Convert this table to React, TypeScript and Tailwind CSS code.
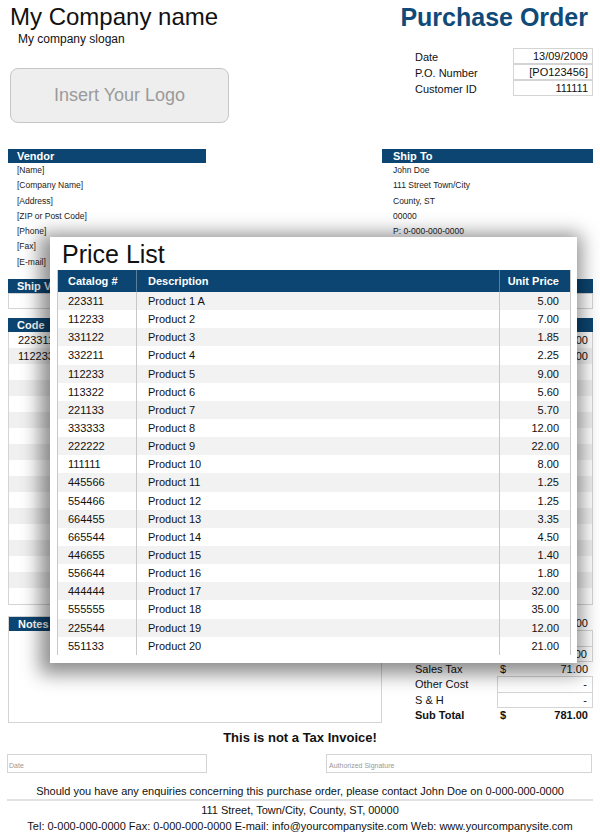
import React from "react";

const blue = "bg-[#0c4571]";

const vendor = ["[Name]", "[Company Name]", "[Address]", "[ZIP or Post Code]", "[Phone]", "[Fax]", "[E-mail]"];
const shipTo = ["John Doe", "111 Street Town/City", "County, ST", "00000", "P: 0-000-000-0000"];

const orderRows = [
  { code: "223311", desc: "Product 1 A", qty: "100", price: "5.00", total: "500.00" },
  { code: "112233", desc: "Product 2", qty: "30", price: "7.00", total: "210.00" },
];

const priceList = [
  ["223311", "Product 1 A", "5.00"],
  ["112233", "Product 2", "7.00"],
  ["331122", "Product 3", "1.85"],
  ["332211", "Product 4", "2.25"],
  ["112233", "Product 5", "9.00"],
  ["113322", "Product 6", "5.60"],
  ["221133", "Product 7", "5.70"],
  ["333333", "Product 8", "12.00"],
  ["222222", "Product 9", "22.00"],
  ["111111", "Product 10", "8.00"],
  ["445566", "Product 11", "1.25"],
  ["554466", "Product 12", "1.25"],
  ["664455", "Product 13", "3.35"],
  ["665544", "Product 14", "4.50"],
  ["446655", "Product 15", "1.40"],
  ["556644", "Product 16", "1.80"],
  ["444444", "Product 17", "32.00"],
  ["555555", "Product 18", "35.00"],
  ["225544", "Product 19", "12.00"],
  ["551133", "Product 20", "21.00"],
];

export default function App() {
  const rows = Array.from({ length: 17 }, (_, i) => orderRows[i]);

  return (
    <div className="relative w-[600px] h-[837px] overflow-hidden bg-white text-[#111] font-['Liberation_Sans',Arial,sans-serif]">
      {/* Header */}
      <div className="flex justify-between pl-[10px] pr-[7px] pt-[2px]">
        <div>
          <div className="text-[24px] leading-[30px]">My Company name</div>
          <div className="pl-[8px] text-[12px] leading-[15px]">My company slogan</div>
          <div className="mt-[21px] w-[219px] h-[55px] rounded-[8px] border border-[#c6c6c6] bg-[#eeeeee] flex items-center justify-center text-[18px] text-[#9a9a9a]">
            Insert Your Logo
          </div>
        </div>
        <div className="flex flex-col items-end">
          <div className="mr-[5px] text-[25px] leading-[30px] font-bold text-[#0f4a78]">Purchase Order</div>
          <div className="mt-[17px] grid grid-cols-[98px_80px] text-[11px]">
            {[
              ["Date", "13/09/2009"],
              ["P.O. Number", "[PO123456]"],
              ["Customer ID", "111111"],
            ].map(([label, value]) => (
              <React.Fragment key={label}>
                <div className="h-[16px] leading-[16px]">{label}</div>
                <div className="h-[16px] leading-[15px] border border-[#d4d4d4] -mt-px first:mt-0 text-right pr-[4px]">{value}</div>
              </React.Fragment>
            ))}
          </div>
        </div>
      </div>

      {/* Vendor / Ship To */}
      <div className="mt-[26px] flex justify-between pl-[8px] pr-[7px]">
        <div className="w-[198px]">
          <div className={`${blue} h-[14px] leading-[14px] pl-[9px] text-[11px] font-bold text-white`}>Vendor</div>
          {vendor.map((v) => (
            <div key={v} className="pl-[9px] text-[8.5px] leading-[15.3px] text-[#222]">{v}</div>
          ))}
        </div>
        <div className="w-[211px]">
          <div className={`${blue} h-[14px] leading-[14px] pl-[11px] text-[11px] font-bold text-white`}>Ship To</div>
          {shipTo.map((v) => (
            <div key={v} className="pl-[11px] text-[8.5px] leading-[15.3px] text-[#222]">{v}</div>
          ))}
        </div>
      </div>

      {/* Ship via */}
      <div className="mt-[9px] mx-[8px] mr-[7px]">
        <div className={`${blue} grid grid-cols-4 h-[14px] leading-[14px] text-[11px] font-bold text-white`}>
          <div className="pl-[9px]">Ship Via</div>
          <div className="pl-[9px]">F.O.B.</div>
          <div className="pl-[9px]">Shipping Terms</div>
          <div className="pl-[9px]">Requisitioner</div>
        </div>
        <div className="grid grid-cols-4 h-[16px] border border-[#d4d4d4]" />
      </div>

      {/* Order table */}
      <div className="mt-[9px] mx-[8px] mr-[7px]">
        <div className={`${blue} grid grid-cols-[120px_250px_50px_70px_1fr] h-[14px] leading-[14px] text-[11px] font-bold text-white`}>
          <div className="pl-[9px]">Code</div>
          <div className="pl-[9px]">Description</div>
          <div className="text-center">Qty</div>
          <div className="text-right pr-[6px]">Unit Price</div>
          <div className="text-center pr-[18px]">Total</div>
        </div>
        <div className="border border-t-0 border-[#d4d4d4]">
          {rows.map((r, i) => (
            <div
              key={i}
              className={`grid grid-cols-[120px_250px_50px_70px_1fr] h-[16px] leading-[16px] text-[11px] ${i % 2 === 1 ? "bg-[#f0f0f0]" : "bg-white"}`}
            >
              <div className="pl-[9px]">{r?.code}</div>
              <div className="pl-[9px]">{r?.desc}</div>
              <div className="text-center">{r?.qty}</div>
              <div className="text-right pr-[6px]">{r?.price}</div>
              <div className="text-right pr-[4px]">{r?.total}</div>
            </div>
          ))}
        </div>
      </div>

      {/* Notes + totals */}
      <div className="mt-[11px] flex justify-between pl-[8px] pr-[7px]">
        <div className="w-[374px] h-[107px] border border-[#d4d4d4]">
          <div className={`${blue} w-[120px] h-[14px] leading-[14px] pl-[9px] text-[11px] font-bold text-white`}>Notes</div>
        </div>
        <div className="w-[178px] text-[11px]">
          {[
            { label: "Subtotal", dollar: true, value: "710.00", box: false },
            { label: "Discount", dollar: false, value: "", box: true },
            { label: "Taxable", dollar: false, value: "710.00", box: true },
            { label: "Sales Tax", dollar: true, value: "71.00", box: false },
            { label: "Other Cost", dollar: false, value: "-", box: true },
            { label: "S & H", dollar: false, value: "-", box: true },
          ].map((t) => (
            <div key={t.label} className="grid grid-cols-[82px_1fr] h-[15.3px] leading-[15.3px]">
              <div>{t.label}</div>
              <div className={`flex justify-between pr-[5px] ${t.box ? "border border-[#d4d4d4] -mt-px leading-[14px]" : ""}`}>
                <span className="pl-[3px]">{t.dollar ? "$" : ""}</span>
                <span>{t.value}</span>
              </div>
            </div>
          ))}
          <div className="grid grid-cols-[82px_1fr] h-[15.3px] leading-[15.3px] font-bold">
            <div>Sub Total</div>
            <div className="flex justify-between pr-[5px]">
              <span className="pl-[3px]">$</span>
              <span>781.00</span>
            </div>
          </div>
        </div>
      </div>

      <div className="mt-[7px] text-center text-[13px] font-bold leading-[16px]">This is not a Tax Invoice!</div>

      <div className="mt-[8px] flex justify-between pl-[7px] pr-[8px]">
        <div className="w-[200px] h-[19px] border border-[#d4d4d4] flex items-end pb-[1px] pl-[1px] text-[7px] text-[#999]">Date</div>
        <div className="w-[266px] h-[19px] border border-[#d4d4d4] flex items-end pb-[1px] pl-[2px] text-[7px] text-[#999]">Authorized Signature</div>
      </div>

      <div className="mt-[11px] text-center text-[11px] leading-[14px]">
        Should you have any enquiries concerning this purchase order, please contact John Doe on 0-000-000-0000
      </div>
      <div className="mx-[7px] mt-[1px] h-[2px] bg-[#e2e2e2]" />
      <div className="mt-[1px] text-center text-[11px] leading-[16px]">111 Street, Town/City, County, ST, 00000</div>
      <div className="text-center text-[11px] leading-[17px]">
        Tel: 0-000-000-0000 Fax: 0-000-000-0000 E-mail: info@yourcompanysite.com Web: www.yourcompanysite.com
      </div>

      {/* Price list popup */}
      <div className="absolute left-[50px] top-[237px] w-[527px] h-[426px] bg-white shadow-[-3px_4px_18px_7px_rgba(0,0,0,0.45)] pl-[7px] pr-[6px]">
        <div className="pl-[5px] pt-[1px] text-[25px] leading-[32px]">Price List</div>
        <div className="border-l border-r border-[#c8c8c8]">
          <div className={`${blue} grid grid-cols-[79px_363px_1fr] h-[22px] leading-[22px] text-[11px] font-bold text-white`}>
            <div className="pl-[10px] border-r border-[#5a7f9c]">Catalog #</div>
            <div className="pl-[11px] border-r border-[#5a7f9c]">Description</div>
            <div className="text-right pr-[11px]">Unit Price</div>
          </div>
          {priceList.map(([code, desc, price], i) => (
            <div
              key={i}
              className={`grid grid-cols-[79px_363px_1fr] h-[18.15px] leading-[18.15px] text-[11px] ${i % 2 === 0 ? "bg-[#f2f2f2]" : "bg-white"}`}
            >
              <div className="pl-[10px] border-r border-[#c8c8c8]">{code}</div>
              <div className="pl-[11px] border-r border-[#c8c8c8]">{desc}</div>
              <div className="text-right pr-[11px]">{price}</div>
            </div>
          ))}
        </div>
      </div>
    </div>
  );
}
